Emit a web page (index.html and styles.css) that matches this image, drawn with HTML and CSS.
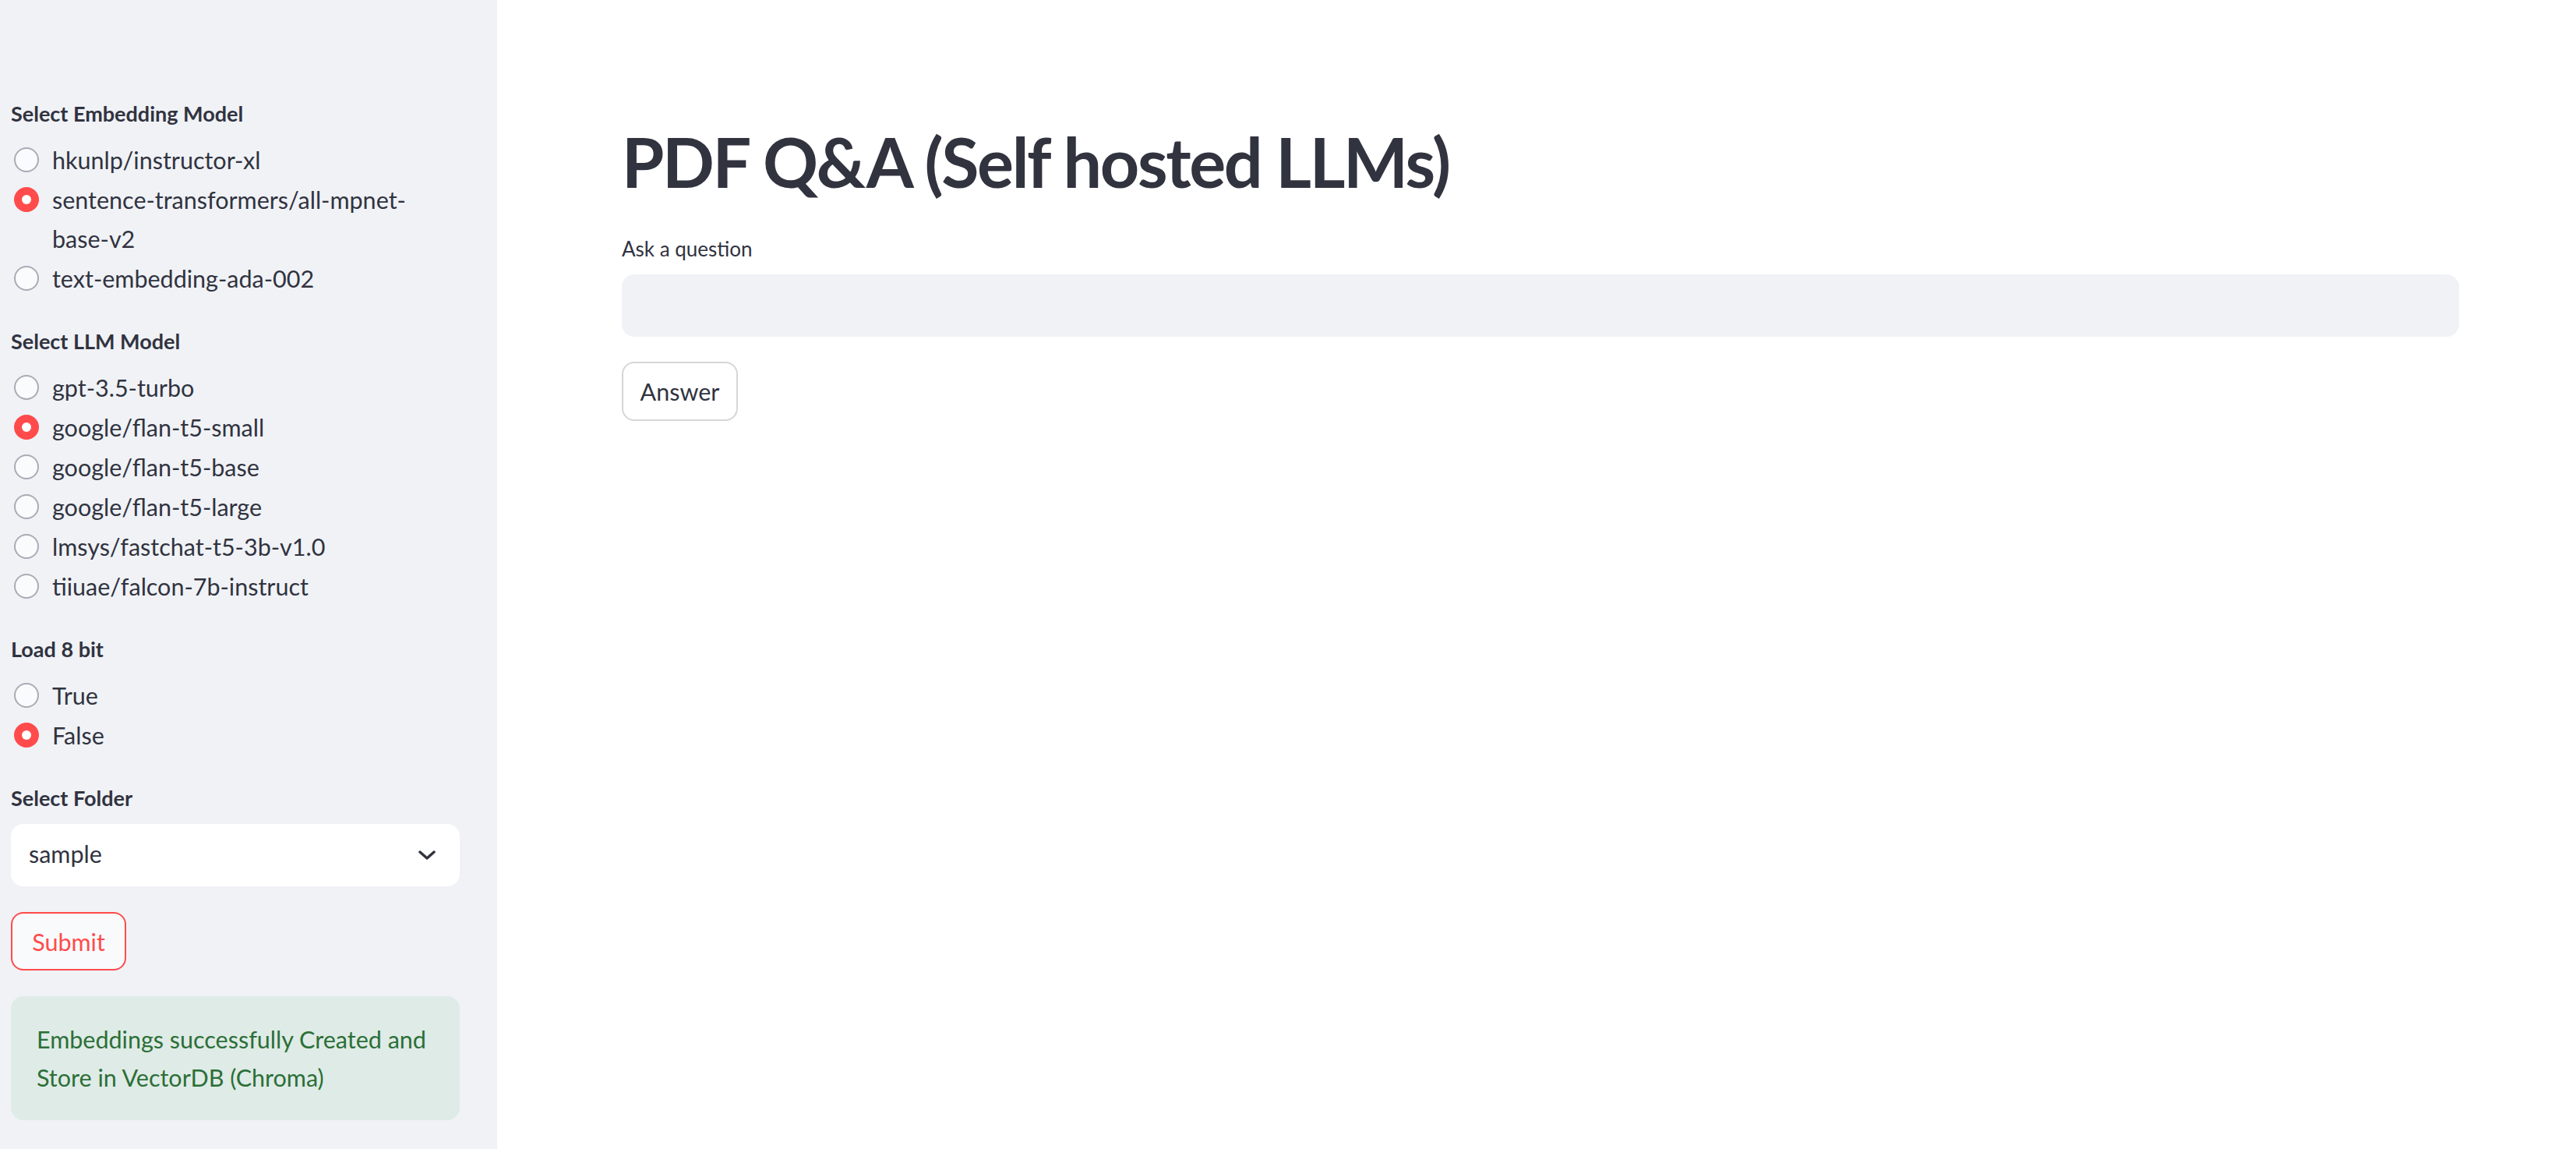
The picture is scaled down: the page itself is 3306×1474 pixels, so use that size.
FILE: index.html
```html
<!DOCTYPE html>
<html lang="en">
<head>
<meta charset="utf-8">
<title>PDF Q&amp;A (Self hosted LLMs)</title>
<link rel="stylesheet" href="styles.css">
</head>
<body>
<div class="app">
  <aside class="sidebar">
    <section class="field first">
      <div class="label">Select Embedding Model</div>
      <div class="radios">
        <div class="radio"><span class="dot"></span><span class="text">hkunlp/instructor-xl</span></div>
        <div class="radio checked"><span class="dot"></span><span class="text">sentence-transformers/all-mpnet-<br>base-v2</span></div>
        <div class="radio"><span class="dot"></span><span class="text">text-embedding-ada-002</span></div>
      </div>
    </section>
    <section class="field">
      <div class="label">Select LLM Model</div>
      <div class="radios">
        <div class="radio"><span class="dot"></span><span class="text">gpt-3.5-turbo</span></div>
        <div class="radio checked"><span class="dot"></span><span class="text">google/flan-t5-small</span></div>
        <div class="radio"><span class="dot"></span><span class="text">google/flan-t5-base</span></div>
        <div class="radio"><span class="dot"></span><span class="text">google/flan-t5-large</span></div>
        <div class="radio"><span class="dot"></span><span class="text">lmsys/fastchat-t5-3b-v1.0</span></div>
        <div class="radio"><span class="dot"></span><span class="text">tiiuae/falcon-7b-instruct</span></div>
      </div>
    </section>
    <section class="field">
      <div class="label">Load 8 bit</div>
      <div class="radios">
        <div class="radio"><span class="dot"></span><span class="text">True</span></div>
        <div class="radio checked"><span class="dot"></span><span class="text">False</span></div>
      </div>
    </section>
    <section class="field">
      <div class="label">Select Folder</div>
      <div class="select">
        <span class="select-value">sample</span>
        <svg class="chevron" width="22" height="12" viewBox="0 0 22 12"><path d="M2 2 L11 10 L20 2" fill="none" stroke="#31333f" stroke-width="3.4" stroke-linecap="round" stroke-linejoin="round"/></svg>
      </div>
    </section>
    <button class="btn btn-submit">Submit</button>
    <div class="success">Embeddings successfully Created and Store in VectorDB (Chroma)</div>
  </aside>
  <main class="main">
    <h1 class="title">PDF Q&amp;A (Self hosted LLMs)</h1>
    <div class="q-label">Ask a question</div>
    <div class="q-input"></div>
    <button class="btn btn-answer">Answer</button>
  </main>
</div>
</body>
</html>
```
FILE: styles.css
```css
* { box-sizing: border-box; }
html, body { margin: 0; padding: 0; }
body {
  font-family: Lato, "Liberation Sans", sans-serif;
  color: #31333f;
  background: #ffffff;
}
.app {
  display: flex;
  min-height: 1474px;
}
.sidebar {
  width: 638px;
  flex: 0 0 638px;
  background: #f0f2f6;
  padding: 128px 48px 0 14px;
}
.field { margin-bottom: 38px; }
.label {
  font-size: 27px;
  font-weight: 700;
  line-height: 36px;
  color: #31333f;
  margin-bottom: 16px;
}
.radios {
  display: flex;
  flex-direction: column;
  gap: 1px;
}
.radio {
  display: flex;
  align-items: flex-start;
  font-size: 30.5px;
  line-height: 50px;
}
.dot {
  flex: 0 0 32px;
  width: 32px;
  height: 32px;
  margin: 9px 17px 0 4px;
  border-radius: 50%;
  border: 2px solid #a9acb6;
  background: #fafbfc;
  position: relative;
}
.radio.checked .dot {
  border-color: #ff4b4b;
  background: #ff4b4b;
}
.radio.checked .dot::after {
  content: "";
  position: absolute;
  left: 50%;
  top: 50%;
  width: 12px;
  height: 12px;
  margin: -6px 0 0 -6px;
  border-radius: 50%;
  background: #ffffff;
}
.field:last-of-type { margin-bottom: 0; }
.select {
  margin-top: -1px;
  height: 80px;
  background: #ffffff;
  border-radius: 16px;
  display: flex;
  align-items: center;
  justify-content: space-between;
  padding: 0 31px 0 23px;
  font-size: 30.5px;
}
.select-value { margin-top: -4px; }
.chevron { display: block; }
.btn {
  font-family: Lato, "Liberation Sans", sans-serif;
  font-size: 30.5px;
  border-radius: 16px;
  cursor: pointer;
  display: inline-flex;
  align-items: center;
  justify-content: center;
}
.btn-submit {
  margin-top: 33px;
  width: 148px;
  height: 75px;
  border: 2px solid #ff4b4b;
  background: #f9fafc;
  color: #ff4b4b;
  padding: 0;
}
.success {
  margin-top: 33px;
  background: #dfebe6;
  color: #2b6f38;
  border-radius: 16px;
  font-size: 30.5px;
  line-height: 49px;
  padding: 31px 30px 30px 33px;
}
.main {
  flex: 1;
  padding: 0 150px 0 160px;
}
.title {
  margin: 155px 0 0 0;
  font-size: 88px;
  line-height: 105px;
  font-weight: 700;
  letter-spacing: -2.4px;
  color: #31333f;
}
.q-label {
  margin-top: 41px;
  font-size: 26px;
  line-height: 36px;
}
.q-input {
  margin-top: 15px;
  height: 80px;
  background: #f0f2f6;
  border-radius: 16px;
}
.btn-answer {
  margin-top: 32px;
  width: 149px;
  height: 76px;
  border: 2px solid #d6d6d9;
  background: #ffffff;
  color: #31333f;
  padding: 0;
}
```
